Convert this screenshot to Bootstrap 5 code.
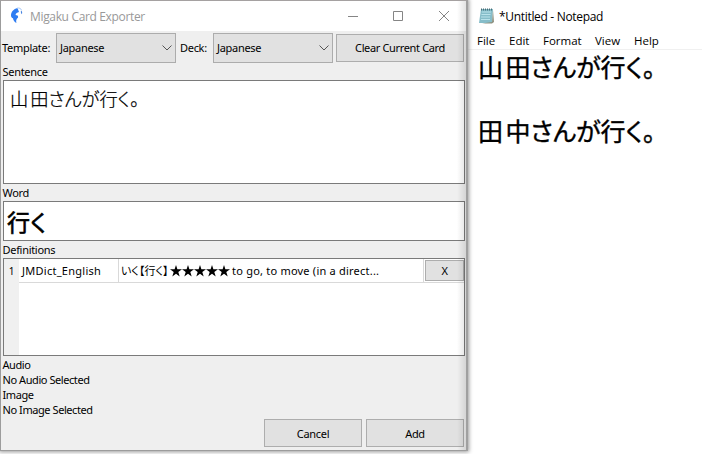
<!DOCTYPE html>
<html lang="en">
<head>
<meta charset="utf-8">
<title>Migaku Card Exporter</title>
<meta name="viewport" content="width=device-width, initial-scale=1">
<link href="https://cdn.jsdelivr.net/npm/bootstrap@5.3.0/dist/css/bootstrap.min.css" rel="stylesheet">
<style>
body{width:702px;height:454px;background:#fff;color:#000;font-family:"Noto Sans","Noto Sans CJK JP",sans-serif;font-size:11px;line-height:15px}
.desk{width:702px;height:454px}
.exporter{width:468px;height:451px;background:#efefef;border:1px solid #9c9c9c;border-top-color:#a5a1a1;border-right:2px solid #a0a0a0;box-shadow:0 0 4px 1px #999;z-index:1;font-size:11px;letter-spacing:-.3px}
.exporter::after{content:"";position:absolute;top:0;right:0;bottom:0;width:9px;background:linear-gradient(90deg,#0000,#0000001c);pointer-events:none}
.titlebar{height:30px;background:#fff;color:#999;padding:0 16px 0 7px}
.title-text{font-family:"Open Sans",sans-serif;font-size:12px;margin-left:6px;letter-spacing:-.34px}
.toolbar{height:33px;padding:0 2px 0 1px}
.toolbar .combo{width:120px;height:30px;border:1px solid #acacac;background:#e1e1e1;padding:0 3px 0 3px}
.push{border:1px solid #adadad;background:#e1e1e1;border-radius:0;padding:0;font-size:11px;line-height:15px;height:28px;color:#000;letter-spacing:-.3px}
.push-clear{width:128px;letter-spacing:-.35px}
.push-foot{width:98px}
.field-label{height:17px;padding-left:1.5px;line-height:18px}
.field-label.first{height:16px;line-height:16px}
.field{margin:0 0 0 2px;width:462px;border:1px solid #7a7a7a;background:#fff}
.sentence{height:104px;padding:5px 0 0 6px;font:300 18.2px/24px "Noto Sans CJK JP",sans-serif;font-feature-settings:"palt";letter-spacing:0;-webkit-text-stroke:.25px #000}
.gap-kanji{letter-spacing:2px}
.word{height:40px;padding:1px 0 0 3px;font:400 23px/37px "Noto Sans CJK JP",sans-serif;font-feature-settings:"palt";letter-spacing:.3px;-webkit-text-stroke:.6px #000}
.defs{height:98px}
.rownum{width:15px;background:#f0f0f0;line-height:25px;text-align:center;font-size:10px}
.defrow{height:24px;border-bottom:1px solid #d9d9d9}
.dict{width:100px;padding-left:3px;border-right:1px solid #d9d9d9;letter-spacing:.27px}
.meaning{padding-left:2px;border-right:1px solid #d9d9d9;letter-spacing:.22px}
.kana{width:46px;font-family:"Noto Sans CJK JP",sans-serif;font-weight:400;font-feature-settings:"palt";letter-spacing:0;white-space:nowrap}
.stars{width:60px;height:12px;margin:0 2px 0 3px}
.push-x{width:39px;height:21px;margin:1px 0 1px 1px}
.statuses{padding:1px 0 0 1.5px;height:62px;letter-spacing:-.43px}
.footer-row{padding-right:2px;margin-top:1px}
.notepad{font-family:"Open Sans","Noto Sans CJK JP",sans-serif}
.np-title{height:32px;padding-left:10px;font-size:12px;letter-spacing:-.32px}
.np-menu{height:18px;padding-left:9px;font-size:11.5px;border-bottom:1px solid #f0f0f0}
.np-text{padding-left:10px;font:400 25px/32px "Noto Sans CJK JP",sans-serif;font-feature-settings:"palt";white-space:pre;-webkit-text-stroke:.4px #000}
.np-text .gap-kanji{letter-spacing:2.5px}
</style>
<script src="https://cdn.jsdelivr.net/npm/bootstrap@5.3.0/dist/js/bootstrap.bundle.min.js"></script>
</head>
<body class="m-0 overflow-hidden">
<main class="desk d-flex overflow-hidden">
  <section class="exporter position-relative flex-shrink-0">
    <header class="titlebar d-flex align-items-center">
      <svg width="16" height="18" viewBox="0 0 16 18"><path d="M9.500 1C5.500 2 3 5 3 8.500c0 1.500.8 2.500 2 2.800.2 2 1.500 4 3.500 4.700C8 14.500 8 13 9 11.500c1.300-.5 1.500-2 .5-3L7.500 8C8 6 9 5.500 11 5z" fill="#2f7df2"/><path d="M9 1.200c2.300-.6 4 .3 4.500 2" fill="none" stroke="#a9c8f5"/><path d="M13 3.500c1.300.8 1.500 2.500.8 3.700-.8-1-1.200-2.200-.8-3.700z" fill="#4683e0"/></svg>
      <span class="title-text">Migaku Card Exporter</span>
      <svg class="ms-auto" width="102" height="12" viewBox="0 0 102 12" fill="none" stroke="#858585"><path d="M0 6.500h10M45.500 1.500h9v9h-9zM91 1l10 10M101 1L91 11"/></svg>
    </header>
    <div class="toolbar d-flex align-items-center">
      <span class="ps-0" style="width:54px">Template:</span>
      <div class="combo d-flex align-items-center justify-content-between"><span>Japanese</span><svg width="10" height="6" fill="none" stroke="#555"><path d="M.5.5 5 5 9.500.5"/></svg></div>
      <span class="ps-1" style="width:37px">Deck:</span>
      <div class="combo d-flex align-items-center justify-content-between"><span>Japanese</span><svg width="10" height="6" fill="none" stroke="#555"><path d="M.5.5 5 5 9.500.5"/></svg></div>
      <button class="btn push push-clear ms-auto">Clear Current Card</button>
    </div>
    <div class="field-label first">Sentence</div>
    <div class="field sentence"><span class="gap-kanji">山</span>田さんが行く。</div>
    <div class="field-label">Word</div>
    <div class="field word">行く</div>
    <div class="field-label">Definitions</div>
    <div class="field defs d-flex">
      <div class="rownum">1</div>
      <div class="flex-grow-1">
        <div class="defrow d-flex align-items-center">
          <div class="dict h-100 d-flex align-items-center">JMDict_English</div>
          <div class="meaning h-100 d-flex align-items-center flex-grow-1"><span class="kana">いく【行く】</span>
            <svg class="stars" viewBox="0 0 60 12"><defs><path id="star" d="M6 0 7.400 4.200H12L8.300 7 9.700 11.500 6 8.800 2.300 11.500 3.700 7 0 4.200H4.600z"/></defs><use href="#star"/><use href="#star" x="12"/><use href="#star" x="24"/><use href="#star" x="36"/><use href="#star" x="48"/></svg>
            <span>to go, to move (in a direct...</span></div>
          <button class="btn push push-x">X</button>
        </div>
      </div>
    </div>
    <div class="statuses"><div>Audio</div><div>No Audio Selected</div><div>Image</div><div>No Image Selected</div></div>
    <footer class="footer-row d-flex justify-content-end gap-1"><button class="btn push push-foot">Cancel</button><button class="btn push push-foot">Add</button></footer>
  </section>
  <section class="notepad flex-grow-1">
    <header class="np-title d-flex align-items-center gap-1">
      <svg width="17" height="18" viewBox="0 0 17 18"><path d="M3 2h12l-1 14H1z" fill="#86bdc9"/><path d="M15 3l1 12-2 1.500H4L14 15z" fill="#8e9180"/><path d="M4 5h9M3.500 7.500h9M3 10h9M3 12.500h9" stroke="#b9e2ea"/><path d="M3 2.500h12" stroke="#496d76" stroke-width="2" stroke-dasharray="1 1"/></svg>
      <span>*Untitled - Notepad</span>
    </header>
    <nav class="np-menu d-flex align-items-center"><span style="width:32px">File</span><span style="width:34px">Edit</span><span style="width:52px">Format</span><span style="width:39px">View</span><span>Help</span></nav>
    <div class="np-text"><span class="gap-kanji">山</span>田さんが行く。

<span class="gap-kanji">田</span>中さんが行く。</div>
  </section>
</main>
</body>
</html>
